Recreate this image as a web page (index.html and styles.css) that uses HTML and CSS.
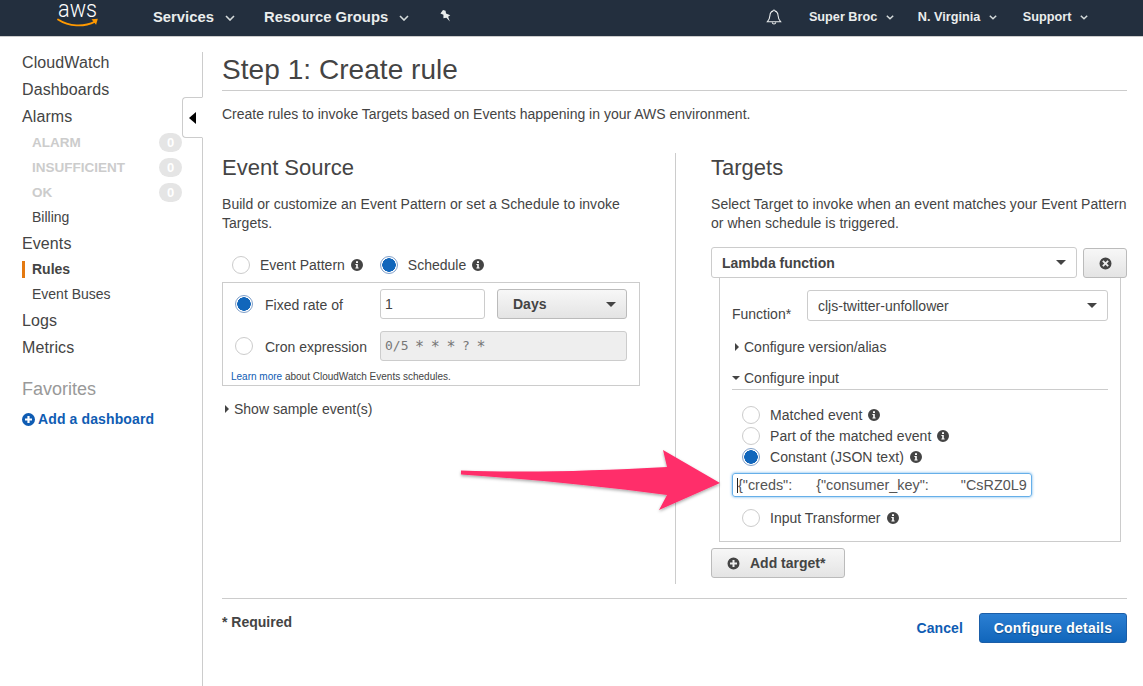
FILE: index.html
```html
<!DOCTYPE html>
<html lang="en">
<head>
    <meta charset="UTF-8">
    <meta name="viewport" content="width=device-width, initial-scale=1.0">
    <title>CloudWatch - Create rule</title>
    <link rel="stylesheet" href="styles.css">
</head>
<body>

<svg class="defs" width="0" height="0">
    <symbol id="info" viewBox="0 0 12 12">
        <path fill-rule="evenodd" d="M6 0a6 6 0 1 1 0 12A6 6 0 0 1 6 0zM5 2.200v1.700h2V2.200zM4.400 5v1h.8v2.600h-.8v1h3.200v-1h-.8V5z"/>
    </symbol>
</svg>

<header class="topbar">
    <svg class="aws-logo" width="42" height="36" viewBox="0 0 42 36">
        <text class="aws-word" x="1" y="16.500" textLength="39" lengthAdjust="spacingAndGlyphs">aws</text>
        <path d="M1 19.500C12 26.800 27 27.200 38 21.600" fill="none" stroke="#f90" stroke-width="1.800" stroke-linecap="round"/>
        <path d="M34.500 19.200l6.300-.4-1.700 6z" fill="#f90"/>
    </svg>
    <a class="nav-main nav-services">Services <svg class="chev" width="10" height="6" viewBox="0 0 10 6"><path d="M1 1l4 4 4-4" fill="none" stroke="#d5dbdb" stroke-width="1.600"/></svg></a>
    <a class="nav-main nav-groups">Resource Groups <svg class="chev" width="10" height="6" viewBox="0 0 10 6"><path d="M1 1l4 4 4-4" fill="none" stroke="#d5dbdb" stroke-width="1.600"/></svg></a>
    <svg class="pin" width="12" height="14" viewBox="0 0 14 15"><path d="M3.500.5L6.500 1.500 7 4.500 12 6.500 9.500 8.500 11.500 14 7.500 9.500 4 10 4 6 .5 4.500z" fill="#eaeded"/></svg>
    <svg class="bell" width="16" height="18" viewBox="0 0 18 18"><path d="M9 1.200c-.8 0-1.200.5-1.300 1.200C5.300 3 4.600 5 4.400 7.500 4.200 10.500 3.600 12 1.600 14.300h14.800C14.400 12 13.800 10.500 13.600 7.500 13.400 5 12.700 3 10.300 2.400 10.200 1.700 9.800 1.200 9 1.200zM7 15.200c.2 1 1 1.600 2 1.600s1.800-.6 2-1.600" fill="none" stroke="#eaeded" stroke-width="1.200"/></svg>
    <a class="nav-sub nav-user">Super Broc <svg class="chev-small" width="8" height="5" viewBox="0 0 8 5"><path d="M.8.8L4 3.800 7.200.8" fill="none" stroke="#d5dbdb" stroke-width="1.500"/></svg></a>
    <a class="nav-sub nav-region">N. Virginia <svg class="chev-small" width="8" height="5" viewBox="0 0 8 5"><path d="M.8.8L4 3.800 7.200.8" fill="none" stroke="#d5dbdb" stroke-width="1.500"/></svg></a>
    <a class="nav-sub nav-support">Support <svg class="chev-small" width="8" height="5" viewBox="0 0 8 5"><path d="M.8.8L4 3.800 7.200.8" fill="none" stroke="#d5dbdb" stroke-width="1.500"/></svg></a>
</header>

<div class="layout">
    <aside class="sidebar">
        <div class="side-top side-first">CloudWatch</div>
        <div class="side-top">Dashboards</div>
        <div class="side-top">Alarms</div>
        <div class="side-sub muted">ALARM<span class="count">0</span></div>
        <div class="side-sub muted">INSUFFICIENT<span class="count">0</span></div>
        <div class="side-sub muted">OK<span class="count">0</span></div>
        <div class="side-sub">Billing</div>
        <div class="side-top">Events</div>
        <div class="side-sub active">Rules</div>
        <div class="side-sub">Event Buses</div>
        <div class="side-top">Logs</div>
        <div class="side-top">Metrics</div>
        <div class="side-fav">Favorites</div>
        <a class="side-add">
            <svg width="13" height="13" viewBox="0 0 13 13"><path fill-rule="evenodd" d="M6.500 0a6.500 6.500 0 1 1 0 13 6.500 6.500 0 0 1 0-13zM5.400 3v2.400H3v2.200h2.400V10h2.200V7.600H10V5.400H7.600V3z" fill="#0f5cb3"/></svg>
            Add a dashboard
        </a>
    </aside>
    <div class="side-toggle"><span class="toggle-arrow"></span></div>

    <main class="content">
        <h1 class="page-title">Step 1: Create rule</h1>
        <p class="page-intro">Create rules to invoke Targets based on Events happening in your AWS environment.</p>

        <div class="columns">
            <section class="col-left">
                <h2>Event Source</h2>
                <p class="col-text">Build or customize an Event Pattern or set a Schedule to invoke Targets.</p>

                <div class="source-choice">
                    <span class="radio"></span><span class="radio-label">Event Pattern</span>
                    <svg class="info"><use href="#info"/></svg>
                    <span class="radio on second"></span><span class="radio-label">Schedule</span>
                    <svg class="info"><use href="#info"/></svg>
                </div>

                <div class="schedule-box">
                    <div class="schedule-row">
                        <span class="radio on"></span><span class="schedule-label">Fixed rate of</span>
                        <div class="field rate-field">1</div>
                        <div class="btn unit-btn">Days<span class="caret"></span></div>
                    </div>
                    <div class="schedule-row">
                        <span class="radio"></span><span class="schedule-label">Cron expression</span>
                        <div class="field cron-field">0/5 <span class="star">*</span> <span class="star">*</span> <span class="star">*</span> ? <span class="star">*</span></div>
                    </div>
                    <p class="learn"><a>Learn more</a> about CloudWatch Events schedules.</p>
                </div>

                <div class="expander show-sample"><span class="tri-right"></span>Show sample event(s)</div>
            </section>

            <section class="col-right">
                <h2>Targets</h2>
                <p class="col-text">Select Target to invoke when an event matches your Event Pattern or when schedule is triggered.</p>

                <div class="target-head">
                    <div class="select target-select">Lambda function<span class="caret"></span></div>
                    <div class="btn remove-btn">
                        <svg width="13" height="13" viewBox="0 0 13 13"><path fill-rule="evenodd" d="M6.500.5a6 6 0 1 1 0 12 6 6 0 0 1 0-12zM4.500 3.200L3.200 4.500l2 2-2 2 1.300 1.300 2-2 2 2 1.300-1.300-2-2 2-2-1.300-1.300-2 2z" fill="#444"/></svg>
                    </div>
                </div>

                <div class="target-panel">
                    <div class="function-row">
                        <span class="function-label">Function*</span>
                        <div class="select function-select">cljs-twitter-unfollower<span class="caret"></span></div>
                    </div>
                    <div class="expander version-line"><span class="tri-right"></span>Configure version/alias</div>
                    <div class="expander input-line"><span class="tri-down"></span>Configure input</div>

                    <div class="input-options">
                        <div class="option"><span class="radio"></span><span class="option-label">Matched event</span><svg class="info"><use href="#info"/></svg></div>
                        <div class="option"><span class="radio"></span><span class="option-label">Part of the matched event</span><svg class="info"><use href="#info"/></svg></div>
                        <div class="option"><span class="radio on"></span><span class="option-label">Constant (JSON text)</span><svg class="info"><use href="#info"/></svg></div>
                    </div>
                    <div class="json-field"><span class="cursor"></span>{"creds":&nbsp;&nbsp;&nbsp;&nbsp;&nbsp;&nbsp;{"consumer_key":&nbsp;&nbsp;&nbsp;&nbsp;&nbsp;&nbsp;&nbsp;&nbsp;"CsRZ0L9</div>
                    <div class="option transformer"><span class="radio"></span><span class="option-label">Input Transformer</span><svg class="info"><use href="#info"/></svg></div>
                </div>

                <div class="btn add-target">
                    <svg width="13" height="13" viewBox="0 0 13 13"><path fill-rule="evenodd" d="M6.500.5a6 6 0 1 1 0 12 6 6 0 0 1 0-12zM5.500 3v2.500H3v2h2.500V10h2V7.500H10v-2H7.500V3z" fill="#444"/></svg>
                    Add target*
                </div>
            </section>
        </div>

        <footer class="form-footer">
            <span class="required">* Required</span>
            <a class="cancel">Cancel</a>
            <div class="primary-btn">Configure details</div>
        </footer>
    </main>
</div>

<svg class="arrow" width="270" height="70" viewBox="0 0 270 70">
    <defs>
        <filter id="arrow-shadow" x="-5%" y="-10%" width="110%" height="125%">
            <feDropShadow dx="0" dy="1.500" stdDeviation="1.500" flood-color="#000" flood-opacity="0.35"/>
        </filter>
    </defs>
    <path d="M12 20.500C80 23 140 21 218 17L214 0 271 33 210 60 218 45C150 36 80 29 12 24.500z" fill="#ff2d6b" filter="url(#arrow-shadow)"/>
</svg>

</body>
</html>
```

FILE: styles.css
```css
body {
    font-family: "Liberation Sans", Arial, sans-serif;
    font-size: 14px;
    color: #444;
    background-color: #fff;
    margin: 0;
    height: 686px;
    overflow: hidden;
    position: relative;
}

.defs {
    position: absolute;
}

a {
    text-decoration: none;
}

/* Top bar */
.topbar {
    display: flex;
    align-items: center;
    height: 36px;
    background-color: #232f3e;
    border-bottom: 1px solid #ccc;
    color: #eaeded;
}

.aws-logo {
    margin-left: 57px;
    flex: none;
}

.aws-word {
    font-family: Roboto, sans-serif;
    font-size: 24px;
    font-weight: 300;
    fill: #fff;
}

.nav-main {
    font-size: 14.800px;
    font-weight: bold;
    color: #eaeded;
    white-space: nowrap;
    margin-bottom: 3px;
}

.nav-services {
    margin-left: 54px;
}

.nav-groups {
    margin-left: 29px;
}

.chev {
    margin-left: 7px;
    vertical-align: 1px;
}

.pin {
    margin-left: 31px;
    margin-bottom: 5px;
}

.bell {
    margin-left: auto;
    margin-bottom: 3px;
}

.nav-sub {
    font-size: 12.700px;
    font-weight: bold;
    color: #eaeded;
    white-space: nowrap;
    margin-bottom: 3px;
}

.chev-small {
    margin-left: 5px;
    vertical-align: 1px;
}

.nav-user {
    margin-left: 27px;
}

.nav-region {
    margin-left: 24px;
}

.nav-support {
    margin-left: 26px;
    margin-right: 55px;
}

/* Page layout */
.layout {
    display: flex;
    padding-top: 15px;
    position: relative;
}

.sidebar {
    width: 180px;
    height: 634px;
    padding-left: 22px;
    border-right: 1px solid #ccc;
    flex: none;
    box-sizing: content-box;
}

.side-first {
    margin-top: -3px;
}

.side-top {
    font-size: 16px;
    line-height: 27px;
    color: #444;
    letter-spacing: 0.1px;
}

.side-sub {
    position: relative;
    font-size: 14px;
    line-height: 25px;
    padding-left: 10px;
}

.muted {
    color: #ccc;
    font-size: 13.500px;
    font-weight: bold;
}

.count {
    position: absolute;
    right: 20px;
    top: 3px;
    width: 23px;
    height: 19px;
    line-height: 19px;
    border-radius: 10px;
    background-color: #e5e5e5;
    color: #fff;
    font-size: 13px;
    text-align: center;
}

.active {
    font-weight: bold;
    border-left: 3px solid #e47911;
    padding-left: 7px;
    line-height: 17px;
    margin: 4px 0;
}

.side-fav {
    font-size: 18px;
    line-height: 27px;
    color: #999;
    margin-top: 15px;
}

.side-add {
    display: flex;
    align-items: center;
    gap: 3px;
    margin-top: 6px;
    line-height: 20px;
    color: #0f5cb3;
    font-weight: bold;
    letter-spacing: 0.12px;
}

.side-toggle {
    position: absolute;
    left: 182px;
    top: 60px;
    width: 21px;
    height: 41px;
    background-color: #fff;
    border: 1px solid #ccc;
    border-right: 1px solid #fff;
    border-radius: 4px 0 0 4px;
    box-sizing: border-box;
    display: flex;
    align-items: center;
    justify-content: center;
}

.toggle-arrow {
    border-right: 7px solid #000;
    border-top: 6px solid transparent;
    border-bottom: 6px solid transparent;
}

/* Main content */
.content {
    flex: 1;
    padding: 0 16px 0 19px;
    min-width: 0;
}

.page-title {
    font-size: 28px;
    font-weight: normal;
    line-height: 36px;
    margin: 0;
    padding-bottom: 2px;
    border-bottom: 1px solid #ccc;
    letter-spacing: 0.05px;
}

.page-intro {
    margin: 14px 0 0;
    line-height: 18px;
}

.columns {
    display: flex;
    margin-top: 30px;
}

.col-left {
    width: 454px;
    padding-right: 36px;
    border-right: 1px solid #ccc;
    box-sizing: border-box;
    height: 431px;
}

.col-left > *:not(h2):not(.col-text) {
    width: 418px;
}

.col-right {
    flex: 1;
    padding-left: 35px;
}

h2 {
    font-size: 22px;
    font-weight: normal;
    line-height: 30px;
    margin: 0;
}

.col-text {
    margin: 12px 0 0;
    line-height: 19px;
    letter-spacing: 0.04px;
}

/* Radios and info icons */
.radio {
    display: inline-block;
    flex: none;
    width: 18px;
    height: 18px;
    box-sizing: border-box;
    border: 1px solid #ccc;
    border-radius: 50%;
    background-color: #fff;
}

.radio.on {
    border: 1px solid #7f9fc9;
    background: radial-gradient(circle, #1166bb 0, #1166bb 6.500px, #fff 7px);
}

.info {
    width: 12px;
    height: 12px;
    fill: #444;
    flex: none;
}

.source-choice {
    display: flex;
    align-items: center;
    margin-top: 23px;
    padding-left: 10px;
    height: 18px;
}

.radio-label {
    margin-left: 10px;
    margin-right: 6px;
}

.second {
    margin-left: 17px;
}

.schedule-box {
    border: 1px solid #ccc;
    box-sizing: border-box;
    height: 104px;
    margin-top: 8px;
    padding: 6px 12px 0;
}

.schedule-row {
    display: flex;
    align-items: center;
    height: 30px;
    margin-bottom: 12px;
}

.schedule-label {
    width: 115px;
    margin-left: 12px;
    padding-top: 1px;
}

.field {
    height: 30px;
    box-sizing: border-box;
    border: 1px solid #ccc;
    border-radius: 3px;
    line-height: 28px;
    padding-left: 4px;
    color: #444;
}

.rate-field {
    width: 105px;
}

.cron-field {
    width: 247px;
    background-color: #eee;
    color: #777;
    font-family: "DejaVu Sans Mono", monospace;
    font-size: 13px;
    word-spacing: -1.200px;
}

.star {
    font-size: 15px;
    line-height: 14px;
    vertical-align: -2px;
}

.btn {
    display: flex;
    align-items: center;
    box-sizing: border-box;
    border: 1px solid #bbb;
    border-radius: 3px;
    background: linear-gradient(#f7f7f7, #e4e4e4);
    font-weight: bold;
    color: #444;
}

.unit-btn {
    width: 130px;
    height: 30px;
    margin-left: 12px;
    padding: 0 10px 0 15px;
    justify-content: space-between;
}

.caret {
    border-top: 5px solid #444;
    border-left: 5px solid transparent;
    border-right: 5px solid transparent;
}

.learn {
    margin: -3px 0 0 -4px;
    font-size: 10px;
    line-height: 14px;
}

.learn a {
    color: #0f5cb3;
}

.expander {
    display: flex;
    align-items: center;
    line-height: 18px;
}

.tri-right {
    border-left: 4px solid #444;
    border-top: 4px solid transparent;
    border-bottom: 4px solid transparent;
    margin-right: 5px;
    flex: none;
}

.tri-down {
    border-top: 4px solid #444;
    border-left: 4px solid transparent;
    border-right: 4px solid transparent;
    margin-right: 4px;
    flex: none;
}

.show-sample {
    margin-top: 14px;
    padding-left: 3px;
}

/* Target card */
.target-head {
    display: flex;
    align-items: flex-start;
    gap: 6px;
    margin-top: 14px;
}

.select {
    display: flex;
    align-items: center;
    justify-content: space-between;
    box-sizing: border-box;
    border: 1px solid #ccc;
    border-radius: 3px;
    background-color: #fff;
    height: 31px;
    padding: 0 10px;
}

.target-select {
    width: 366px;
    font-weight: bold;
}

.remove-btn {
    width: 44px;
    height: 30px;
    margin-top: 1px;
    justify-content: center;
}

.target-panel {
    box-sizing: border-box;
    width: 402px;
    height: 264px;
    margin-left: 8px;
    border: 1px solid #ccc;
    border-top: none;
    padding: 12px 12px 0;
}

.function-row {
    display: flex;
    align-items: flex-start;
}

.function-label {
    width: 75px;
    margin-top: 15px;
    line-height: 18px;
}

.function-select {
    width: 301px;
    flex: none;
}

.version-line {
    margin-top: 15px;
    padding-left: 3px;
}

.input-line {
    margin-top: 12px;
    padding-bottom: 2px;
    border-bottom: 1px solid #ccc;
    height: 19px;
}

.input-options {
    margin-top: 14px;
    letter-spacing: 0.04px;
}

.option {
    display: flex;
    align-items: center;
    height: 21px;
    padding-left: 10px;
}

.option-label {
    margin-left: 10px;
    margin-right: 6px;
}

.json-field {
    width: 300px;
    height: 24px;
    box-sizing: border-box;
    margin-top: 6px;
    border: 1px solid #66afe9;
    border-radius: 3px;
    box-shadow: 0 0 3px #66afe9;
    font-size: 14.400px;
    line-height: 22px;
    padding-left: 4px;
    color: #555;
    white-space: nowrap;
    overflow: hidden;
}

.cursor {
    display: inline-block;
    width: 1px;
    height: 15px;
    background-color: #222;
    vertical-align: -3px;
}

.transformer {
    margin-top: 10px;
}

.add-target {
    width: 134px;
    height: 30px;
    margin-top: 6px;
    padding-left: 15px;
    gap: 10px;
}

/* Footer */
.form-footer {
    display: flex;
    align-items: flex-start;
    margin-top: 14px;
    padding-top: 14px;
    border-top: 1px solid #ccc;
}

.required {
    font-weight: bold;
    margin-top: 1px;
}

.cancel {
    margin-left: auto;
    color: #0f5cb3;
    font-weight: bold;
    margin-top: 7px;
    letter-spacing: 0.1px;
}

.primary-btn {
    width: 148px;
    height: 30px;
    margin-left: 16px;
    box-sizing: border-box;
    border: 1px solid #1b5ea8;
    border-radius: 3px;
    background: linear-gradient(#2b7fd3, #1166bb);
    color: #fff;
    font-weight: bold;
    line-height: 28px;
    text-align: center;
    letter-spacing: 0.25px;
    text-shadow: 0 1px 1px rgba(0, 0, 0, 0.3);
}

/* Annotation drawn on top of the screenshot */
.arrow {
    position: absolute;
    left: 449px;
    top: 450px;
    overflow: visible;
}
```
